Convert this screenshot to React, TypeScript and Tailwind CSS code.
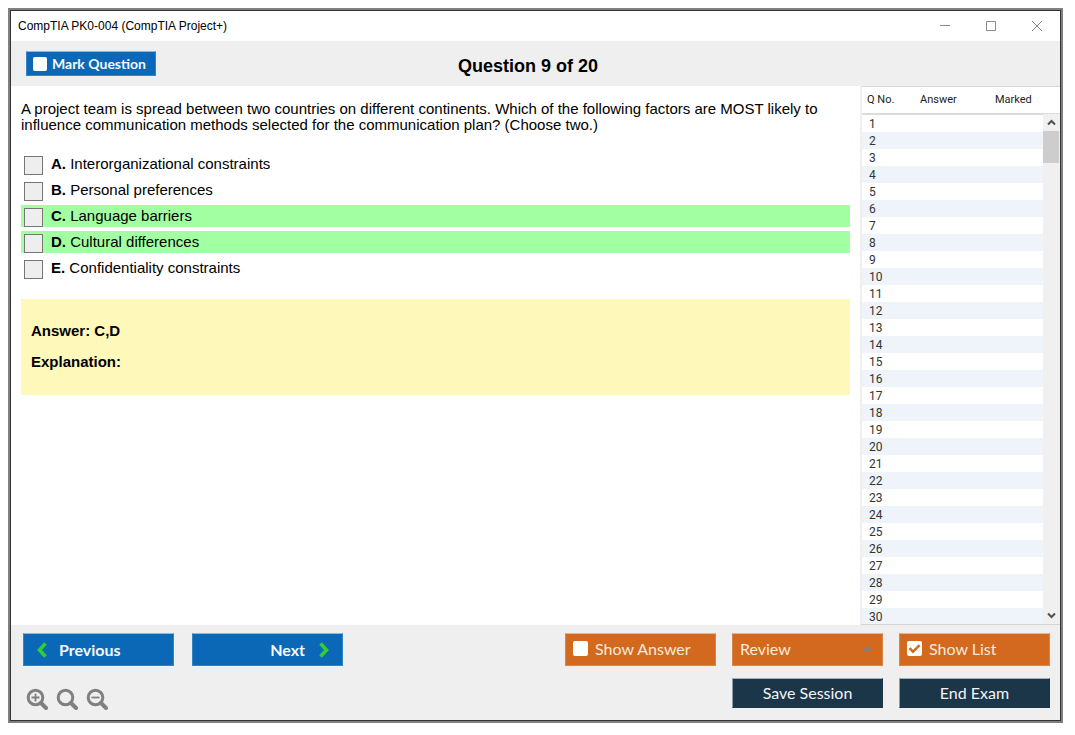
import React, { useState } from 'react';

const OPTIONS = [
    { key: 'A', text: 'Interorganizational constraints', correct: false },
    { key: 'B', text: 'Personal preferences', correct: false },
    { key: 'C', text: 'Language barriers', correct: true },
    { key: 'D', text: 'Cultural differences', correct: true },
    { key: 'E', text: 'Confidentiality constraints', correct: false },
];

const QUESTIONS = Array.from({ length: 30 }, (_, i) => i + 1);

const BLUE = 'bg-[#0a68b6] border border-[#3585c6] border-t-[#8db9dc] text-[#f4f8fc] font-bold';
const ORANGE = 'w-[151px] h-[33px] pb-[2px] bg-[#d2691e] border border-[#da8448] border-t-[#e6b48e] text-[#fbe9dc] text-base';
const NAVY = 'w-[151px] h-[30px] bg-[#1b3549] border border-[#1b3549] border-t-[#9fb0b8] border-l-[#8a9ca6] text-[#f2f4f6] text-base';

const WindowButton: React.FC<{ label: string; children: React.ReactNode }> = ({ label, children }) => (
    <button aria-label={label} className="w-[46px] h-full flex items-center justify-center">
        <svg width="12" height="12" viewBox="0 0 12 12" fill="none" stroke="#8a8a8a">{children}</svg>
    </button>
);

const ZoomButton: React.FC<{ label: string; children?: React.ReactNode }> = ({ label, children }) => (
    <button aria-label={label}>
        <svg width="22" height="22" viewBox="0 0 22 22" fill="none" stroke="#808080">
            <circle cx="9.5" cy="9.5" r="7.3" strokeWidth="3" />
            <path d="M15 15 20 20" strokeWidth="4" strokeLinecap="round" />
            {children}
        </svg>
    </button>
);

const Chevron: React.FC<{ d: string }> = ({ d }) => (
    <svg width="10" height="16" viewBox="0 0 10 16" fill="none" stroke="#32cd32" strokeWidth="3.6">
        <path d={d} />
    </svg>
);

const CheckToggle: React.FC<{ label: string; initial: boolean }> = ({ label, initial }) => {
    const [checked, setChecked] = useState(initial);
    return (
        <label className={`${ORANGE} flex items-center gap-[7px] pl-[7px]`}>
            <span className="grid">
                <input
                    type="checkbox" checked={checked} onChange={e => setChecked(e.target.checked)}
                    className="appearance-none col-start-1 row-start-1 size-[15px] rounded-[2px] bg-white"
                />
                {checked && (
                    <svg className="col-start-1 row-start-1 pointer-events-none" width="15" height="15" viewBox="0 0 15 15" fill="none" stroke="#d2691e" strokeWidth="2.4">
                        <path d="M2.5 7.2 6 10.7 12.6 4.2" />
                    </svg>
                )}
            </span>
            {label}
        </label>
    );
};

const QuestionList: React.FC = () => (
    <aside className="w-[200px] shrink-0 flex flex-col overflow-hidden border-l-2 border-b border-l-[#efefef] border-b-[#d4d4d4] font-[Roboto,sans-serif] text-[12px]">
        <div className="flex-1 min-h-0 grid grid-rows-[minmax(0,1fr)] grid-cols-[1fr_17px]">
            <table className="col-span-2 row-start-1 col-start-1 w-full table-fixed border-collapse text-left self-start">
                <thead>
                    <tr className="h-[27px] border-t border-t-[#d6d6d6] border-b-2 border-b-[#dcdcdc] text-[11px] text-[#222]">
                        <th className="w-[54px] pl-[5px] font-normal">Q No.</th>
                        <th className="w-[75px] pl-1 font-normal">Answer</th>
                        <th className="pl-1 font-normal">Marked</th>
                    </tr>
                </thead>
                <tbody>
                    {QUESTIONS.map(n => (
                        <tr key={n} className="h-[17px] leading-4 text-[#333] even:bg-[#eef4f9]">
                            <td className="pl-[7px] pt-px">{n}</td>
                            <td />
                            <td />
                        </tr>
                    ))}
                </tbody>
            </table>
            <div className="col-start-2 row-start-1 mt-7 pr-px flex flex-col bg-[#f0f0f0] relative">
                <button aria-label="Scroll up" className="h-[17px] flex items-center justify-center">
                    <svg width="9" height="7" viewBox="0 0 9 7" fill="none" stroke="#505050" strokeWidth="2"><path d="M1 5.5 4.5 2 8 5.5" /></svg>
                </button>
                <div className="h-8 bg-[#cdcdcd]" />
                <button aria-label="Scroll down" className="h-[17px] mt-auto flex items-center justify-center">
                    <svg width="9" height="7" viewBox="0 0 9 7" fill="none" stroke="#505050" strokeWidth="2"><path d="M1 1.5 4.5 5 8 1.5" /></svg>
                </button>
            </div>
        </div>
    </aside>
);

const App: React.FC = () => (
    <div className="h-screen flex bg-white pt-2 pl-2 pr-3 pb-3 font-['Liberation_Sans',Arial,sans-serif] text-black">
        <div className="flex-1 flex border-2 border-[#808080]">
            <div className="flex-1 flex flex-col border border-[#333]">
                <div className="h-[30px] shrink-0 flex items-center pl-[7px]">
                    <span className="flex-1 text-[12px]">CompTIA PK0-004 (CompTIA Project+)</span>
                    <WindowButton label="Minimize"><path d="M1 5.5h10" /></WindowButton>
                    <WindowButton label="Maximize"><path d="M1.5 1.5h9v9h-9z" /></WindowButton>
                    <WindowButton label="Close"><path d="m1 1 10 10M11 1 1 11" /></WindowButton>
                </div>

                <header className="h-[45px] shrink-0 flex items-center bg-[#efefef] pl-[15px] pr-40">
                    <label className={`${BLUE} w-[130px] h-[25px] flex items-center gap-[5px] pl-[6px] font-[Lato,sans-serif] text-[14px]`}>
                        <input type="checkbox" className="appearance-none size-[14px] rounded-[2px] bg-white" />
                        Mark Question
                    </label>
                    <h1 className="flex-1 text-center text-[18px] font-bold pt-1.5">Question 9 of 20</h1>
                </header>

                <div className="flex-1 min-h-0 flex">
                    <main className="flex-1 overflow-y-auto px-[10px] pt-[15px] text-[15px]">
                        <p className="leading-4">
                            A project team is spread between two countries on different continents. Which of the following factors are MOST likely to influence communication methods selected for the communication plan? (Choose two.)
                        </p>
                        <div className="mt-5 flex flex-col gap-1">
                            {OPTIONS.map(o => (
                                <label key={o.key} className={`h-[22px] flex pl-[3px] gap-2 leading-[22px] ${o.correct ? 'bg-[#a2ffa2]' : ''}`}>
                                    <input type="checkbox" className="appearance-none size-[19px] mt-[3px] bg-[#eee] border border-[#767676]" />
                                    <span><b>{o.key}.</b> {o.text}</span>
                                </label>
                            ))}
                        </div>
                        <section className="mt-5 h-24 px-[10px] pt-6 bg-[#fff8bb] font-bold leading-4">
                            <p>Answer: C,D</p>
                            <p className="mt-[15px]">Explanation:</p>
                        </section>
                    </main>
                    <QuestionList />
                </div>

                <footer className="shrink-0 flex justify-between bg-[#efefef] pt-2 pb-[10px] pl-3 pr-[10px] font-[Lato,sans-serif]">
                    <div className="flex flex-col gap-[22px]">
                        <div className="flex gap-[18px]">
                            <button className={`${BLUE} w-[151px] h-[33px] flex items-center gap-3 pl-[13px]`}>
                                <Chevron d="M8.5 1.5 2.5 8l6 6.5" />
                                Previous
                            </button>
                            <button className={`${BLUE} w-[151px] h-[33px] flex items-center justify-end gap-[14px] pr-[13px]`}>
                                Next
                                <Chevron d="M1.5 1.5 7.5 8l-6 6.5" />
                            </button>
                        </div>
                        <div className="flex gap-2 pl-[3px]">
                            <ZoomButton label="Zoom in"><path d="M5.5 9.5h8M9.5 5.5v8" strokeWidth="1.8" /></ZoomButton>
                            <ZoomButton label="Reset zoom" />
                            <ZoomButton label="Zoom out"><path d="M5.5 9.5h8" strokeWidth="1.8" /></ZoomButton>
                        </div>
                    </div>
                    <div className="flex flex-col gap-3">
                        <div className="flex gap-4">
                            <CheckToggle label="Show Answer" initial={false} />
                            <div className="grid">
                                <select aria-label="Review" className={`${ORANGE} col-start-1 row-start-1 appearance-none pl-[7px]`}>
                                    <option>Review</option>
                                </select>
                                <svg className="col-start-1 row-start-1 self-center justify-self-end mr-[10px] mb-px pointer-events-none" width="11" height="6" viewBox="0 0 11 6" fill="#808080">
                                    <path d="M5.5 0 11 6H0z" />
                                </svg>
                            </div>
                            <CheckToggle label="Show List" initial />
                        </div>
                        <div className="flex justify-end gap-4">
                            <button className={NAVY}>Save Session</button>
                            <button className={NAVY}>End Exam</button>
                        </div>
                    </div>
                </footer>
            </div>
        </div>
    </div>
);

export default App;
